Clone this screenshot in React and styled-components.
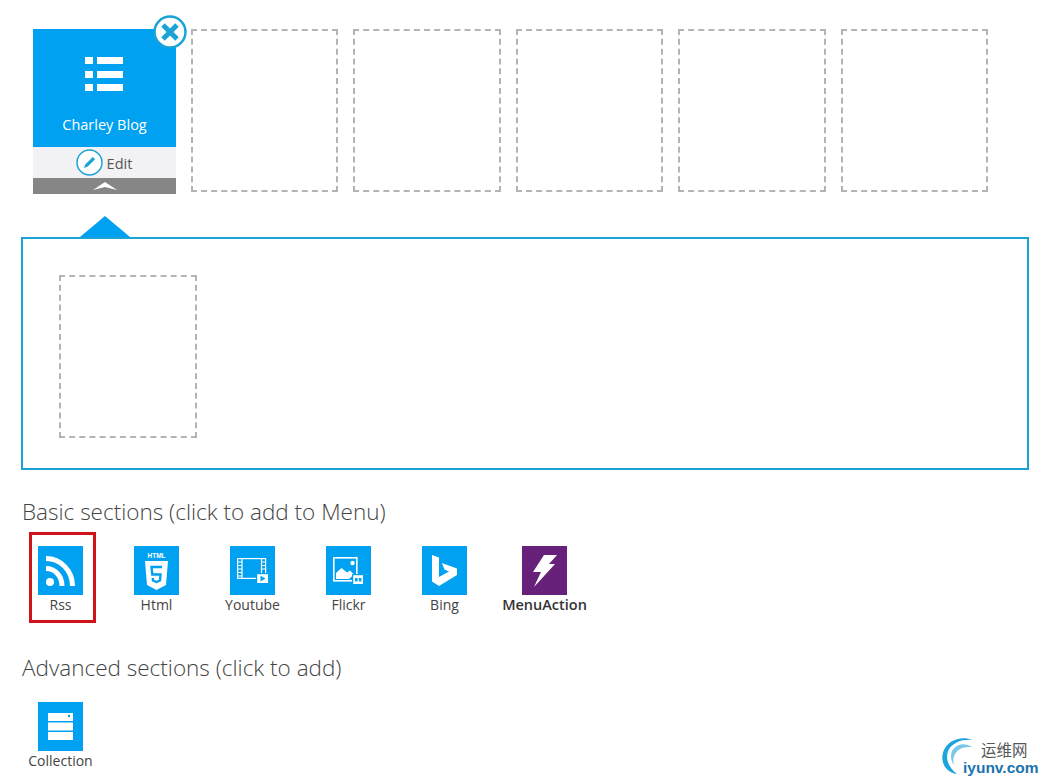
import React from 'react'
import styled, { createGlobalStyle } from 'styled-components'

const blue = '#00a1f1'
const line = '#1ba3d6'

const GlobalStyle = createGlobalStyle`
  html, body {
    margin: 0;
    padding: 0;
    background: #fff;
    font-family: 'Open Sans', 'Noto Sans', sans-serif;
  }
`

const Page = styled.div`
  position: relative;
  width: 1044px;
  height: 784px;
  padding: 29px 15px 0 21px;
  box-sizing: border-box;
  overflow: hidden;
`

const TopRow = styled.div`
  display: flex;
  align-items: flex-start;
  gap: 15px;
  padding-left: 12px;
`

const Card = styled.div`
  position: relative;
  flex: none;
  width: 143px;
`

const CardFace = styled.div`
  height: 118px;
  background: ${blue};
  color: #fff;
  display: flex;
  flex-direction: column;
  align-items: center;
  padding: 26px 2px 0 0;
  box-sizing: border-box;
`

const CardTitle = styled.div`
  margin: 24px 0 0 2px;
  font-size: 14.5px;
  line-height: 20px;
`

const EditStrip = styled.div`
  height: 31px;
  background: #f2f2f4;
  display: flex;
  align-items: center;
  justify-content: center;
  gap: 4px;
  padding-right: 1px;
  color: #555;
  font-size: 14.5px;
`

const EditLabel = styled.span`
  padding-top: 2px;
`

const CollapseStrip = styled.div`
  height: 16px;
  background: #868686;
  display: flex;
  justify-content: center;
  padding-top: 4px;
  box-sizing: border-box;
`

const CloseBadge = styled.div`
  position: absolute;
  top: -14px;
  right: -11px;
  width: 34px;
  height: 34px;
`

const Slot = styled.div`
  flex: ${p => (p.$fixed ? 'none' : '0 0 147.4px')};
  width: ${p => (p.$fixed ? '138px' : 'auto')};
  height: 163px;
  box-sizing: border-box;
  border: 2px dashed #b4b4b4;
`

const Panel = styled.div`
  position: relative;
  margin-top: 43px;
  width: 1008px;
  height: 233px;
  box-sizing: border-box;
  border: 2px solid ${line};
  padding: 36px;
  &::before {
    content: '';
    position: absolute;
    left: 57px;
    top: -23px;
    border-style: solid;
    border-width: 0 25px 21px;
    border-color: transparent transparent ${blue};
  }
`

const Heading = styled.h2`
  margin: ${p => p.$top}px 0 0 1px;
  font-size: 22.5px;
  line-height: 30px;
  font-weight: 300;
  color: #444;
`

const TileRow = styled.div`
  display: flex;
  margin-top: ${p => p.$top}px;
  padding-left: 17px;
`

const Item = styled.div`
  position: relative;
  flex: none;
  width: ${p => p.$width || 96}px;
  &::before {
    content: ${p => (p.$selected ? "''" : 'none')};
    position: absolute;
    left: -9px;
    top: -14px;
    width: 61px;
    height: 85px;
    border: 3px solid #d0121b;
  }
`

const Tile = styled.div`
  width: 45px;
  height: 49px;
  background: ${p => p.$color || blue};
  display: flex;
  align-items: center;
  justify-content: center;
`

const Label = styled.div`
  width: 45px;
  display: flex;
  justify-content: center;
  white-space: nowrap;
  margin-top: 1px;
  font-size: ${p => (p.$dark ? 14.5 : 14)}px;
  line-height: 18px;
  color: ${p => (p.$dark ? '#333' : '#444')};
  font-weight: ${p => (p.$dark ? 600 : 400)};
`

const Watermark = styled.div`
  position: absolute;
  left: 940px;
  top: 737px;
  width: 104px;
  height: 42px;
`

const WatermarkCn = styled.span`
  position: absolute;
  left: 41px;
  top: 3px;
  font-family: 'Noto Sans CJK SC', sans-serif;
  font-size: 15.5px;
  line-height: 18px;
  color: #555;
`

const WatermarkEn = styled.span`
  position: absolute;
  left: 23px;
  top: 22px;
  font-family: 'Liberation Sans', sans-serif;
  font-size: 15.5px;
  font-weight: 700;
  line-height: 18px;
  color: #1b74ad;
`

const ListIcon = () => (
  <svg width="38" height="36" viewBox="0 0 38 36" fill="#fff">
    <rect x="0" y="2" width="8" height="7" />
    <rect x="12" y="2" width="26" height="7" />
    <rect x="0" y="16" width="8" height="7" />
    <rect x="12" y="16" width="26" height="7" />
    <rect x="0" y="29" width="8" height="7" />
    <rect x="12" y="29" width="26" height="7" />
  </svg>
)

const CloseIcon = () => (
  <svg width="34" height="34" viewBox="0 0 34 34">
    <circle cx="17" cy="17" r="15.5" fill="#fff" stroke={line} strokeWidth="2.5" />
    <path d="M10 10 L24 24 M24 10 L10 24" stroke={line} strokeWidth="5" fill="none" />
  </svg>
)

const PencilIcon = () => (
  <svg width="27" height="27" viewBox="0 0 27 27">
    <circle cx="13.5" cy="13.5" r="12.5" fill="#fff" stroke={line} strokeWidth="1.5" />
    <path d="M8 19 L9.2 15.5 L16.8 7.9 L19.1 10.2 L11.5 17.8 Z" fill={line} />
  </svg>
)

const ChevronIcon = () => (
  <svg width="24" height="8" viewBox="0 0 24 8">
    <path d="M0 8 L12 0 L24 8 L12 5 Z" fill="#fff" />
  </svg>
)

const RssIcon = () => (
  <svg width="29" height="30" viewBox="0 0 29 30" fill="none" stroke="#fff">
    <circle cx="4" cy="26" r="4" fill="#fff" stroke="none" />
    <path d="M0 12.5 C9 12.5 16 20 16 30" strokeWidth="5" />
    <path d="M0 2.5 C15 2.5 26.5 15 26.5 30" strokeWidth="5" />
  </svg>
)

const HtmlIcon = () => (
  <svg width="23" height="38" viewBox="0 0 23 38">
    <text x="11.5" y="5.5" textAnchor="middle" fontFamily="Liberation Sans, sans-serif" fontSize="6.5" fontWeight="700" fill="#fff">HTML</text>
    <path d="M0 9 H23 L21 33 L11.5 38 L2 33 Z" fill="#fff" />
    <path d="M17 15 H6.5 L7.3 22.5 H15.5 L15 28.5 L11.5 30 L8 28.5 L7.8 26" fill="none" stroke={blue} strokeWidth="2.4" />
  </svg>
)

const VideoIcon = () => (
  <svg width="32" height="26" viewBox="0 0 32 26" fill="none" stroke="#fff">
    <rect x="0.6" y="0.6" width="28" height="19.8" strokeWidth="1.2" />
    <path d="M5 0.6 V20.4 M24.5 0.6 V20.4" strokeWidth="1.2" />
    <path d="M0.6 4 H5 M0.6 7.5 H5 M0.6 11 H5 M0.6 14.5 H5 M0.6 18 H5 M24.5 4 H28.6 M24.5 7.5 H28.6 M24.5 11 H28.6" strokeWidth="1.2" />
    <rect x="19.6" y="15.6" width="12" height="10" fill="#fff" stroke={blue} strokeWidth="1.2" />
    <path d="M23.5 17.8 L28.5 20.6 L23.5 23.4 Z" fill={blue} stroke="none" />
  </svg>
)

const PhotoIcon = () => (
  <svg width="31" height="28" viewBox="0 0 31 28" fill="none">
    <rect x="0.8" y="0.8" width="23" height="23" stroke="#fff" strokeWidth="1.6" />
    <circle cx="19.5" cy="6" r="2.2" fill="#fff" />
    <path d="M3 22 V16 L8.5 11 L14 15.5 L17 13.5 L21 17.5 L16 22 Z" fill="#fff" />
    <rect x="19.6" y="17.6" width="11" height="10" fill="#fff" stroke={blue} strokeWidth="1.2" />
    <rect x="22" y="21" width="2.6" height="3.4" fill={blue} />
    <rect x="25.8" y="21" width="2.6" height="3.4" fill={blue} />
  </svg>
)

const BingIcon = () => (
  <svg width="25" height="31" viewBox="0 0 25 31" fill="#fff">
    <path d="M0 0 L7 2.5 V22 L17 16.5 L12.5 14.5 L9.8 8 L25 13.5 V20 L7 31 L0 26.5 Z" />
  </svg>
)

const BoltIcon = () => (
  <svg width="24" height="32" viewBox="0 0 24 32" fill="#fff">
    <path d="M11 0 H24 L16 9 H22 L1 32 L8 17 H0 Z" />
  </svg>
)

const ServerIcon = () => (
  <svg width="25" height="27" viewBox="0 0 25 27">
    <rect y="0" width="25" height="8" fill="#fff" />
    <rect y="9.5" width="25" height="8" fill="#fff" />
    <rect y="19" width="25" height="8" fill="#fff" />
    <circle cx="21" cy="3" r="1.2" fill={blue} />
  </svg>
)

const LogoMark = () => (
  <svg width="42" height="42" viewBox="0 0 42 42" fill="none">
    <path d="M17 37 C3 35 -1 21 5 11 C11 2 22 -1 33 3 C23 2 13 5 8.5 13 C5 21 8 30 17 37 Z" fill="#1da4dc" />
    <path d="M32 10 C25 5 16 7 12 14 C10 19 11 24 14 28 C12 21 15 15 20 12 C24 10 28 10 32 10 Z" fill="#7cc8ea" />
  </svg>
)

const basicSections = [
  { name: 'Rss', icon: <RssIcon />, selected: true },
  { name: 'Html', icon: <HtmlIcon /> },
  { name: 'Youtube', icon: <VideoIcon /> },
  { name: 'Flickr', icon: <PhotoIcon /> },
  { name: 'Bing', icon: <BingIcon />, width: 100 },
  { name: 'MenuAction', icon: <BoltIcon />, color: '#68217a', dark: true }
]

const Section = ({ name, icon, color, dark, selected, width }) => (
  <Item $selected={selected} $width={width}>
    <Tile $color={color}>{icon}</Tile>
    <Label $dark={dark}>{name}</Label>
  </Item>
)

const App = () => (
  <Page>
    <GlobalStyle />
    <TopRow>
      <Card>
        <CardFace>
          <ListIcon />
          <CardTitle>Charley Blog</CardTitle>
        </CardFace>
        <EditStrip>
          <PencilIcon />
          <EditLabel>Edit</EditLabel>
        </EditStrip>
        <CollapseStrip>
          <ChevronIcon />
        </CollapseStrip>
        <CloseBadge>
          <CloseIcon />
        </CloseBadge>
      </Card>
      <Slot />
      <Slot />
      <Slot />
      <Slot />
      <Slot />
    </TopRow>
    <Panel>
      <Slot $fixed />
    </Panel>
    <Heading $top={27}>Basic sections (click to add to Menu)</Heading>
    <TileRow $top={19}>
      {basicSections.map(s => (
        <Section key={s.name} {...s} />
      ))}
    </TileRow>
    <Heading $top={39}>Advanced sections (click to add)</Heading>
    <TileRow $top={19}>
      <Section name="Collection" icon={<ServerIcon />} />
    </TileRow>
    <Watermark>
      <LogoMark />
      <WatermarkCn>运维网</WatermarkCn>
      <WatermarkEn>iyunv.com</WatermarkEn>
    </Watermark>
  </Page>
)

export default App
